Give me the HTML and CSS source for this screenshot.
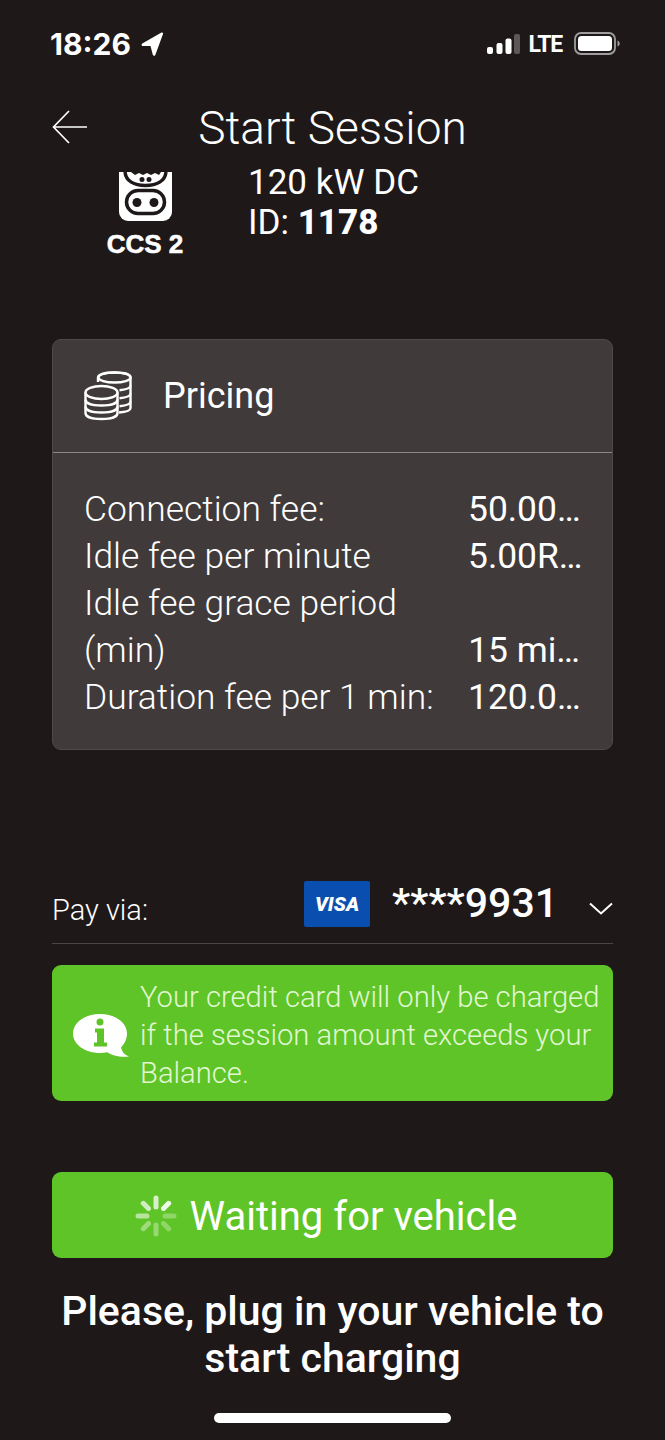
FILE: index.html
```html
<!DOCTYPE html>
<html lang="en">

<head>
    <meta charset="UTF-8">
    <meta name="viewport" content="width=device-width, initial-scale=1.0">
    <title>Start Session</title>
    <link rel="stylesheet" href="styles.css">
</head>

<body>
    <div class="screen">
        <div class="status-bar">
            <div class="status-left">
                <span class="clock">18:26</span>
                <svg class="location" viewBox="0 0 22 24"><path d="M20.500.6 1.300 11.500c-1.200.7-.8 2.500.6 2.500H9.500l2.300 8.800c.4 1.300 2 1.400 2.500.2L22 2c.4-1-.6-2-1.500-1.400z" fill="#fff"/></svg>
            </div>
            <div class="status-right">
                <svg class="signal" viewBox="0 0 33 20">
                    <rect x="0" y="13" width="6" height="7" rx="2" fill="#fff"/>
                    <rect x="9.500" y="9" width="6" height="11" rx="2" fill="#fff"/>
                    <rect x="18.500" y="4.500" width="6" height="15.500" rx="2" fill="#fff"/>
                    <rect x="27" y="0" width="6" height="20" rx="2" fill="#5c5859"/>
                </svg>
                <span class="lte">LTE</span>
                <svg class="battery" viewBox="0 0 46 24">
                    <rect x="1" y="1" width="40" height="21" rx="6" fill="none" stroke="#a09d9e" stroke-width="1.800"/>
                    <rect x="4" y="4" width="34" height="15" rx="3.500" fill="#fff"/>
                    <path d="M43.500 8.500c1.500.5 2.200 1.700 2.200 3s-.7 2.500-2.200 3z" fill="#a09d9e"/>
                </svg>
            </div>
        </div>

        <div class="top-bar">
            <svg class="back" viewBox="0 0 36 34"><path d="M35 17H1.500M17 1 1.500 17 17 33" fill="none" stroke="#fff" stroke-width="1.700"/></svg>
            <h1>Start Session</h1>
        </div>

        <div class="content">
            <div class="connector">
                <div class="plug">
                    <svg viewBox="0 0 53 49">
                        <path d="M0 0H53V40a9 9 0 0 1-9 9H9a9 9 0 0 1-9-9z" fill="#fff"/>
                        <path d="M6 0c1 9 9 13.500 20.500 13.500S46 9 47 0" fill="none" stroke="#1e1819" stroke-width="3.500"/>
                        <path d="M12 0l4 3 4-2 4 2 4-2 4 2 4-2 4 2 2-3z" fill="#1e1819"/>
                        <circle cx="23" cy="7.500" r="2.500" fill="#1e1819"/>
                        <circle cx="30" cy="7.500" r="2.500" fill="#1e1819"/>
                        <rect x="7.500" y="18.500" width="38" height="23" rx="11.500" fill="none" stroke="#1e1819" stroke-width="3.500"/>
                        <circle cx="18" cy="30.500" r="4.500" fill="#1e1819"/>
                        <circle cx="35" cy="30.500" r="4.500" fill="#1e1819"/>
                    </svg>
                    <div class="plug-name">CCS 2</div>
                </div>
                <div class="connector-info">
                    <div>120 kW DC</div>
                    <div>ID: <b>1178</b></div>
                </div>
            </div>

            <div class="pricing">
                <div class="pricing-head">
                    <svg class="coins" viewBox="0 0 48 50" fill="none" stroke="#fff" stroke-width="2.400">
                        <path d="M14 11V6.500C14 3.500 20 1.500 30.500 1.500S46.500 3.500 46.500 6.500V37c0 2.500-4 4-11.500 4.500"/>
                        <ellipse cx="30.500" cy="6.500" rx="16" ry="5"/>
                        <path d="M46.500 14.500c0 2.500-4 4-11 4.800M46.500 22.500c0 2.500-4 4-11 4.800M46.500 30.500c0 2.500-4 4-11 4.800"/>
                        <ellipse cx="17.500" cy="21.500" rx="16" ry="6.500"/>
                        <path d="M1.500 21.500V42c0 3.500 6 6 16 6s16-2.500 16-6V21.500"/>
                        <path d="M1.500 28.500c0 3.500 6 6 16 6s16-2.500 16-6M1.500 35.500c0 3.500 6 6 16 6s16-2.500 16-6"/>
                    </svg>
                    <span>Pricing</span>
                </div>
                <div class="pricing-rows">
                    <div class="row"><span class="row-label">Connection fee:</span><span class="row-value">50.00…</span></div>
                    <div class="row"><span class="row-label">Idle fee per minute</span><span class="row-value">5.00R…</span></div>
                    <div class="row"><span class="row-label">Idle fee grace period (min)</span><span class="row-value">15 mi…</span></div>
                    <div class="row"><span class="row-label">Duration fee per 1 min:</span><span class="row-value">120.0…</span></div>
                </div>
            </div>

            <div class="pay-via">
                <span class="pay-label">Pay via:</span>
                <div class="pay-card">
                    <div class="visa">VISA</div>
                    <span class="card-number">****9931</span>
                    <svg class="chevron" viewBox="0 0 24 13"><path d="M1 1.500 12 11.500 23 1.500" fill="none" stroke="#fff" stroke-width="2"/></svg>
                </div>
            </div>

            <div class="notice">
                <svg class="info" viewBox="0 0 56 43">
                    <path d="M27 0C12 0 0 8.500 0 19.500S12 39 27 39c2.500 0 5-.2 7.500-.8 4 3.300 13 5.300 21.500 4.300-4.500-1.500-7-4.500-8-9C51.500 30 54 25 54 19.500 54 8.500 42 0 27 0z" fill="#fff"/>
                    <circle cx="27" cy="8" r="3.500" fill="#5fc427"/>
                    <path d="M22 14.500H31V28.500H34V32.500H21V28.500H24V18.500H22z" fill="#5fc427"/>
                </svg>
                <p>Your credit card will only be charged if the session amount exceeds your Balance.</p>
            </div>

            <div class="waiting">
                <svg class="spinner" viewBox="0 0 42 42" stroke="#fff" stroke-width="5" stroke-linecap="round">
                    <path d="M21 3V12" opacity=".75"/>
                    <path d="M33.700 8.300 28.500 13.500" opacity=".9"/>
                    <path d="M39 21H30" opacity=".3"/>
                    <path d="M33.700 33.700 28.500 28.500" opacity=".3"/>
                    <path d="M21 39V30" opacity=".35"/>
                    <path d="M8.300 33.700 13.500 28.500" opacity=".4"/>
                    <path d="M3 21H12" opacity=".55"/>
                    <path d="M8.300 8.300 13.500 13.500" opacity=".7"/>
                </svg>
                <span>Waiting for vehicle</span>
            </div>

            <p class="plug-in">Please, plug in your vehicle to start charging</p>
        </div>

        <div class="home-indicator"></div>
    </div>
</body>

</html>
```

FILE: styles.css
```css
* {
    margin: 0;
    padding: 0;
    box-sizing: border-box;
}

body {
    font-family: Roboto, 'Liberation Sans', sans-serif;
    font-weight: 300;
    background: #1e1819;
    color: white;
}

.screen {
    height: 1440px;
    overflow: hidden;
    display: flex;
    flex-direction: column;
}

.status-bar {
    height: 88px;
    padding: 27px 45px 0 50px;
    display: flex;
    justify-content: space-between;
    align-items: flex-start;
}

.status-left,
.status-right {
    display: flex;
    align-items: center;
    height: 34px;
}

.clock {
    font-family: Inter, 'Liberation Sans', sans-serif;
    font-weight: 700;
    font-size: 30px;
}

.location {
    width: 22px;
    height: 24px;
    margin-left: 10px;
}

.signal {
    width: 33px;
    height: 20px;
    margin-right: 9px;
}

.lte {
    font-weight: 700;
    font-size: 23px;
    letter-spacing: -1.2px;
    margin-right: 12px;
}

.battery {
    width: 46px;
    height: 24px;
}

.top-bar {
    height: 84px;
    padding-bottom: 4px;
    position: relative;
    display: flex;
    align-items: center;
    justify-content: center;
}

.back {
    position: absolute;
    left: 52px;
    top: 22px;
    width: 36px;
    height: 34px;
}

h1 {
    font-weight: 300;
    font-size: 46px;
}

.content {
    flex: 1;
    padding: 0 52px;
}

.connector {
    height: 167px;
    display: flex;
    align-items: flex-start;
}

.plug {
    width: 100px;
    margin-left: 43px;
    text-align: center;
}

.plug svg {
    display: block;
    width: 53px;
    height: 49px;
    margin: 0 auto;
}

.plug-name {
    font-family: 'Liberation Sans', sans-serif;
    font-weight: 700;
    font-size: 26px;
    margin-top: 8px;
    -webkit-text-stroke: 0.6px white;
}

.connector-info {
    margin-left: 53px;
    margin-top: -9px;
    font-size: 35px;
    font-weight: 400;
    line-height: 40px;
}

.connector-info b {
    font-weight: 800;
}

.pricing {
    background: #413a3b;
    border: 1px solid #4f494a;
    border-radius: 9px;
    height: 411px;
}

.pricing-head {
    height: 113px;
    padding-left: 31px;
    display: flex;
    align-items: center;
    gap: 31px;
    border-bottom: 1px solid #8b8687;
    font-size: 36px;
    font-weight: 400;
}

.coins {
    width: 48px;
    height: 50px;
}

.pricing-rows {
    padding: 33px 32px 0 31px;
}

.row {
    display: flex;
    justify-content: space-between;
    align-items: flex-end;
    font-size: 35.400px;
    line-height: 47px;
}

.row-label {
    width: 352px;
}

.row-value {
    font-weight: 400;
    width: 112px;
    text-align: right;
    white-space: nowrap;
}

.pay-via {
    margin-top: 130px;
    height: 64px;
    border-bottom: 1px solid #4a4546;
    display: flex;
    justify-content: space-between;
}

.pay-label {
    font-size: 29px;
    margin-top: 13px;
}

.pay-card {
    display: flex;
    align-items: flex-start;
}

.visa {
    width: 66px;
    height: 46px;
    margin-top: 1px;
    background: #0a4fb0;
    border-radius: 2px;
    font-weight: 900;
    font-style: italic;
    font-size: 20px;
    line-height: 46px;
    text-align: center;
}

.card-number {
    font-size: 41px;
    font-weight: 500;
    margin-left: 22px;
    line-height: 46px;
}

.chevron {
    width: 24px;
    height: 13px;
    margin: 22px 0 0 31px;
}

.notice {
    margin-top: 21px;
    height: 136px;
    background: #5fc427;
    border-radius: 9px;
    padding-left: 21px;
    display: flex;
    align-items: center;
    gap: 11px;
}

.info {
    width: 56px;
    height: 43px;
    flex-shrink: 0;
    margin-top: 4px;
}

.notice p {
    font-size: 29.200px;
    line-height: 38px;
    padding-top: 4px;
    color: #e2f7d4;
}

.waiting {
    margin-top: 71px;
    height: 86px;
    padding: 2px 13px 0 0;
    background: #5fc427;
    border-radius: 9px;
    display: flex;
    align-items: center;
    justify-content: center;
    gap: 13px;
    font-size: 40px;
    font-weight: 400;
}

.spinner {
    width: 42px;
    height: 42px;
}

.plug-in {
    margin-top: 30px;
    font-size: 41px;
    font-weight: 500;
    line-height: 47px;
    text-align: center;
}

.home-indicator {
    position: absolute;
    left: 214px;
    top: 1413px;
    width: 237px;
    height: 10px;
    border-radius: 5px;
    background: white;
}
```
